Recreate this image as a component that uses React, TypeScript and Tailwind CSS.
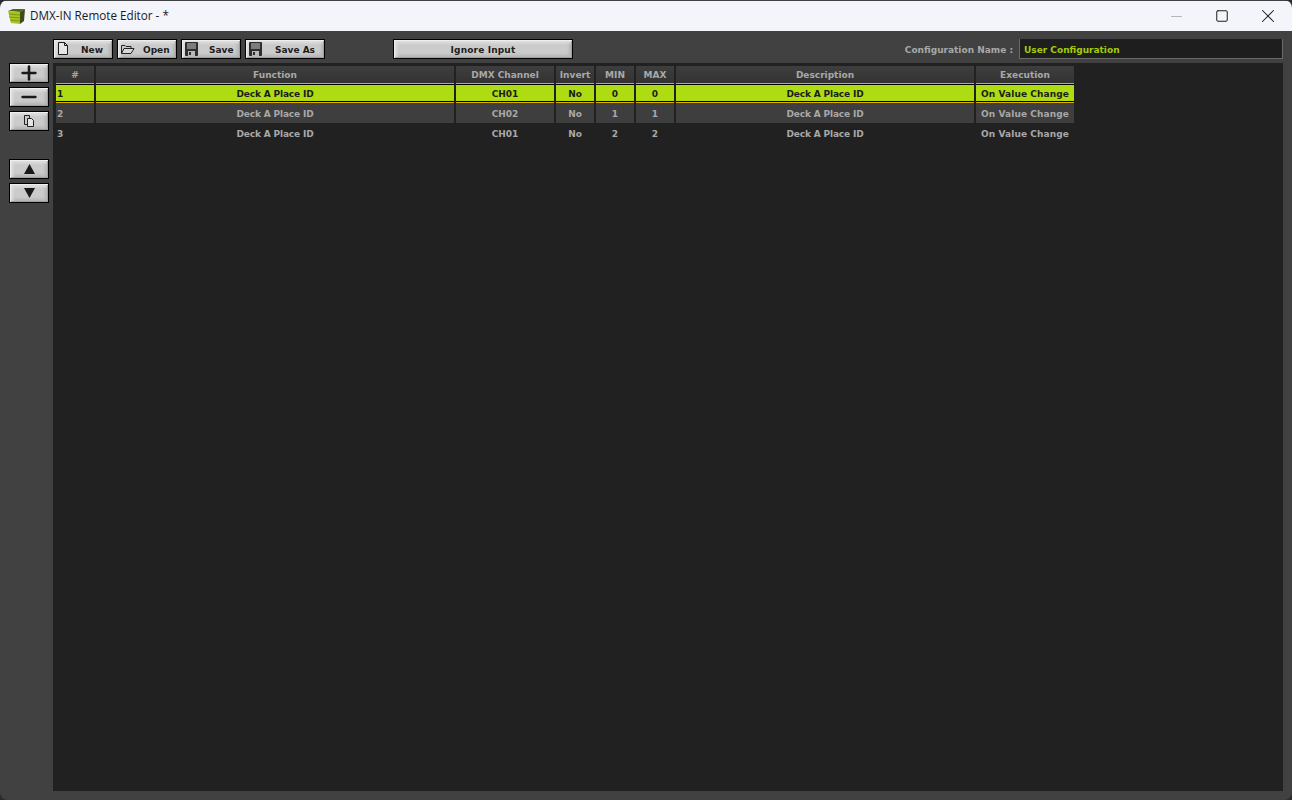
import type { ReactNode } from 'react';
import { Minus, Plus, Square, X } from 'lucide-react';

const columns = [
  { title: '#', width: 'w-[38px]' },
  { title: 'Function', width: 'w-[358px]' },
  { title: 'DMX Channel', width: 'w-[98px]' },
  { title: 'Invert', width: 'w-[38px]' },
  { title: 'MIN', width: 'w-[38px]' },
  { title: 'MAX', width: 'w-[38px]' },
  { title: 'Description', width: 'w-[298px]' },
  { title: 'Execution', width: 'w-[98px]' },
];

const rows = [
  ['1', 'Deck A Place ID', 'CH01', 'No', '0', '0', 'Deck A Place ID', 'On Value Change'],
  ['2', 'Deck A Place ID', 'CH02', 'No', '1', '1', 'Deck A Place ID', 'On Value Change'],
  ['3', 'Deck A Place ID', 'CH01', 'No', '2', '2', 'Deck A Place ID', 'On Value Change'],
];

const bevel =
  'border border-black bg-[#cbcbcb] shadow-[inset_1px_1px_0_#eeeeee,inset_-1px_-1px_0_#a0a0a0,inset_3px_3px_3px_#e0e0e0,inset_-3px_-3px_3px_#b4b4b4]';

function CubeLogo() {
  return (
    <svg width="17" height="17" viewBox="0 0 17 17" className="shrink-0">
      <path d="M0 3 L5 1 L17 1 L12 4 Z" fill="#55661a" />
      <path d="M0 3 L12 4 L12 16 L3 15 Z" fill="#a9c41e" />
      <path d="M12 4 L17 1 L16 13 L12 16 Z" fill="#3f4a14" />
      <path d="M1 6 L12 7 M1 9 L12 10 M2 12 L12 13" stroke="#7b9714" strokeWidth="1" />
    </svg>
  );
}

function NewIcon() {
  return (
    <svg width="14" height="16" viewBox="0 0 14 16" className="shrink-0">
      <path d="M2.5 1.5 H8.5 L11.5 4.5 V13.5 H2.5 Z" fill="#e6e6e6" stroke="#1c1c1c" />
      <path d="M8.5 1.5 V4.5 H11.5" fill="none" stroke="#1c1c1c" />
    </svg>
  );
}

function OpenIcon() {
  return (
    <svg width="15" height="12" viewBox="0 0 15 12" className="mt-[2px] shrink-0">
      <path d="M1.5 9.5 V1.5 H5 L6 2.5 H11 V4.5" fill="none" stroke="#222" />
      <path d="M1.5 9.5 L4 4.5 H14 L11 9.5 Z" fill="#d8d8d8" stroke="#222" />
    </svg>
  );
}

function SaveIcon() {
  return (
    <svg width="13" height="14" viewBox="0 0 13 14" className="shrink-0">
      <rect x="0" y="0" width="13" height="14" rx="1" fill="#2e2e2e" />
      <rect x="2" y="1" width="9" height="6" fill="#7c7c7c" />
      <rect x="3" y="9" width="7" height="5" fill="#b9b9b9" />
      <rect x="4" y="10" width="2" height="3" fill="#2e2e2e" />
    </svg>
  );
}

function CopyIcon() {
  return (
    <svg width="12" height="14" viewBox="0 0 12 14">
      <path d="M1.5 1.5 H6.5 V10.5 H1.5 Z" fill="#c9c9c9" stroke="#222" />
      <path d="M4.5 4.5 H8.5 L10.5 6.5 V12.5 H4.5 Z" fill="#e4e4e4" stroke="#222" />
    </svg>
  );
}

function ToolButton({ icon, label, width, pad }: { icon: ReactNode; label: string; width: string; pad: string }) {
  return (
    <div className={`${bevel} ${width} h-5 flex items-center pl-px`}>
      <div className="w-[16px] flex justify-center">{icon}</div>
      <span className={`${pad} pt-[4px] text-[9px] font-bold text-[#1d1d1d]`}>{label}</span>
    </div>
  );
}

function SideButton({ children, className = '' }: { children: ReactNode; className?: string }) {
  return <div className={`${bevel} ${className} w-10 h-5 flex items-center justify-center`}>{children}</div>;
}

function Triangle({ down = false }: { down?: boolean }) {
  return (
    <svg width="11" height="10" viewBox="0 0 11 10">
      <path d={down ? 'M0 0 H11 L5.5 10 Z' : 'M5.5 0 L11 10 H0 Z'} fill="#1a1a1a" />
    </svg>
  );
}

export default function App() {
  return (
    <div
      className="w-[1292px] h-[800px] bg-[#2c2c2c] text-[9px] overflow-hidden"
      style={{ fontFamily: '"DejaVu Sans", Verdana, sans-serif' }}
    >
      <div className="h-[800px] pt-px rounded-lg overflow-hidden flex flex-col bg-[#414141]">
        {/* Title bar */}
        <div className="h-[30px] shrink-0 bg-[#f3f5fb] flex items-center pl-[8px]">
          <CubeLogo />
          <span
            className="ml-[5px] text-[11.7px] text-[#1a1a1a]"
            style={{ fontFamily: '"Open Sans", sans-serif' }}
          >
            DMX-IN Remote Editor - *
          </span>
          <div className="ml-auto pr-px flex items-center text-[#1a1a1a]">
            <div className="w-[46px] flex justify-center text-[#b4b4b4]">
              <Minus size={17} strokeWidth={1.4} />
            </div>
            <div className="w-[46px] flex justify-center">
              <Square size={14} strokeWidth={1.7} />
            </div>
            <div className="w-[46px] flex justify-center">
              <X size={22} strokeWidth={1.1} />
            </div>
          </div>
        </div>

        {/* Toolbar */}
        <div className="h-[32px] shrink-0 flex items-start pt-2 pl-[53px] pr-[9px]">
          <div className="flex gap-1">
            <ToolButton icon={<NewIcon />} label="New" width="w-[60px]" pad="ml-[10px]" />
            <ToolButton icon={<OpenIcon />} label="Open" width="w-[60px]" pad="ml-[8px]" />
            <ToolButton icon={<SaveIcon />} label="Save" width="w-[60px]" pad="ml-[10px]" />
            <ToolButton icon={<SaveIcon />} label="Save As" width="w-[80px]" pad="ml-[12px]" />
          </div>
          <div className={`${bevel} ml-[68px] w-[180px] h-5 flex items-center justify-center pt-[4px] font-bold tracking-[0.15px] text-[#1d1d1d]`}>
            Ignore Input
          </div>
          <div className="ml-auto flex items-center h-5">
            <span className="pt-[4px] font-bold text-[#a8a8a8] mr-[6px]">Configuration Name :</span>
            <div className="w-[264px] h-5 bg-[#1e1e1e] border-b border-l border-r border-[#6a6a6a] flex items-center pl-[4px] pt-[4px] font-bold text-[#a5cc0a]">
              User Configuration
            </div>
          </div>
        </div>

        {/* Body */}
        <div className="flex-1 flex pr-[9px] pb-[9px] min-h-0">
          <div className="w-[53px] shrink-0 flex flex-col items-start pl-[9px] gap-[4px]">
            <SideButton>
              <Plus size={22} strokeWidth={2.8} className="text-[#1a1a1a]" />
            </SideButton>
            <SideButton>
              <Minus size={22} strokeWidth={2.8} className="text-[#1a1a1a]" />
            </SideButton>
            <SideButton>
              <CopyIcon />
            </SideButton>
            <SideButton className="mt-[24px]">
              <Triangle />
            </SideButton>
            <SideButton>
              <Triangle down />
            </SideButton>
          </div>

          <div className="flex-1 bg-[#212121] pt-[3px] pl-[3px]">
            <div className="flex gap-[2px] h-[17px]">
              {columns.map((col) => (
                <div
                  key={col.title}
                  className={`${col.width} pt-[3px] bg-gradient-to-b from-[#3e3e3e] to-[#333333] flex items-center justify-center font-bold text-[#a8a8a8]`}
                >
                  {col.title}
                </div>
              ))}
            </div>
            {rows.map((row, rowIndex) => {
              const selected = rowIndex === 0;
              return (
                <div key={row[0]} className="flex gap-[2px] h-[20px]">
                  {row.map((cell, i) => (
                    <div
                      key={i}
                      className={`${columns[i].width} pt-[4px] flex items-center font-bold ${
                        i === 0 ? 'justify-start pl-px' : 'justify-center'
                      } ${i === 1 || i === 6 ? 'tracking-[-0.15px]' : ''} ${i === 7 ? 'tracking-[0.1px]' : ''} ${
                        selected
                          ? 'bg-[#aedc12] text-[#1c1c1c] border-y border-[#e0ac10] shadow-[inset_0_1px_0_#000,inset_0_-1px_0_#000]'
                          : rowIndex === 1
                            ? 'bg-[#3e3e3e] text-[#a8a8a8]'
                            : 'text-[#a8a8a8]'
                      }`}
                    >
                      {cell}
                    </div>
                  ))}
                </div>
              );
            })}
          </div>
        </div>
      </div>
    </div>
  );
}
